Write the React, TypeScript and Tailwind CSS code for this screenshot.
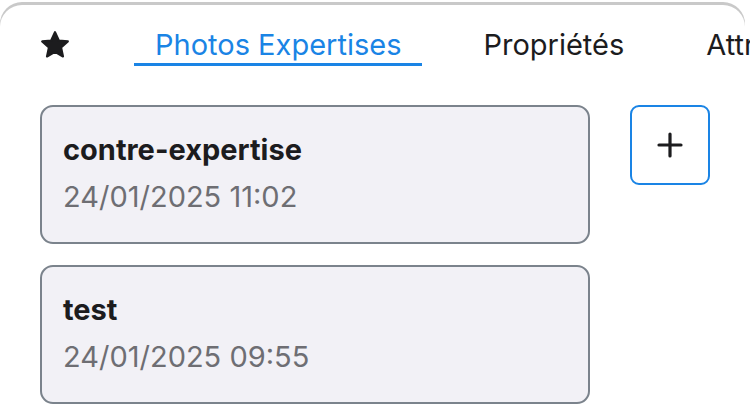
import * as React from "react";

const tabs = ["Photos Expertises", "Propriétés", "Attributs"];

const photos = [
  { title: "contre-expertise", date: "24/01/2025 11:02" },
  { title: "test", date: "24/01/2025 09:55" },
];

function StarIcon() {
  return (
    <svg width="30" height="30" viewBox="1 1 22 22" className="-ml-[3px] text-[#1c1c1e]">
      <path
        fill="currentColor"
        stroke="currentColor"
        strokeWidth="1.6"
        strokeLinejoin="round"
        d="M12 2.6l2.8 6.1 6.6.7-4.95 4.45 1.4 6.55L12 17.05 6.15 20.4l1.4-6.55L2.6 9.4l6.6-.7z"
      />
    </svg>
  );
}

export default function App() {
  const [active, setActive] = React.useState(0);

  return (
    <div className="h-[414px] w-[750px] overflow-hidden bg-white pt-[5px] font-['Inter','Roboto',sans-serif]">
      <div className="h-full w-[745px] rounded-t-[22px] bg-white shadow-[0_-3px_0_#c9c9c9]">
        <div className="flex h-[61px] items-end pl-[43px]">
          <div className="flex h-[38px] w-[91px] shrink-0 items-center pb-[4px]">
            <StarIcon />
          </div>
          <div className="flex shrink-0 gap-[40px] whitespace-nowrap">
            {tabs.map((t, i) => (
              <button
                key={t}
                onClick={() => setActive(i)}
                className={
                  "border-b-[3px] px-[21px] pb-[1px] text-[29px] leading-[34px] " +
                  (i === active ? "border-[#1a84e5] text-[#1a84e5]" : "border-transparent text-[#1c1c1e]")
                }
              >
                {t}
              </button>
            ))}
          </div>
        </div>

        <div className="flex gap-[40px] pl-[40px] pt-[39px]">
          <div className="flex w-[550px] flex-col gap-[21px]">
            {photos.map((p) => (
              <div
                key={p.title}
                className="flex h-[139px] flex-col rounded-[13px] border-2 border-[#7b838c] bg-[#f2f1f6] px-[21px] pt-[26px]"
              >
                <div className="text-[29px] font-bold leading-[34px] text-[#1c1c1e]">{p.title}</div>
                <div className="mt-[13px] text-[29px] leading-[34px] text-[#6e6e73]">{p.date}</div>
              </div>
            ))}
          </div>
          <button className="flex h-[80px] w-[80px] items-center justify-center rounded-[9px] border-2 border-[#1a84e5] bg-white">
            <svg width="26" height="26" viewBox="0 0 26 26">
              <path d="M13 2v22M2 13h22" stroke="#1c1c1e" strokeWidth="3.2" strokeLinecap="round" />
            </svg>
          </button>
        </div>
      </div>
    </div>
  );
}
